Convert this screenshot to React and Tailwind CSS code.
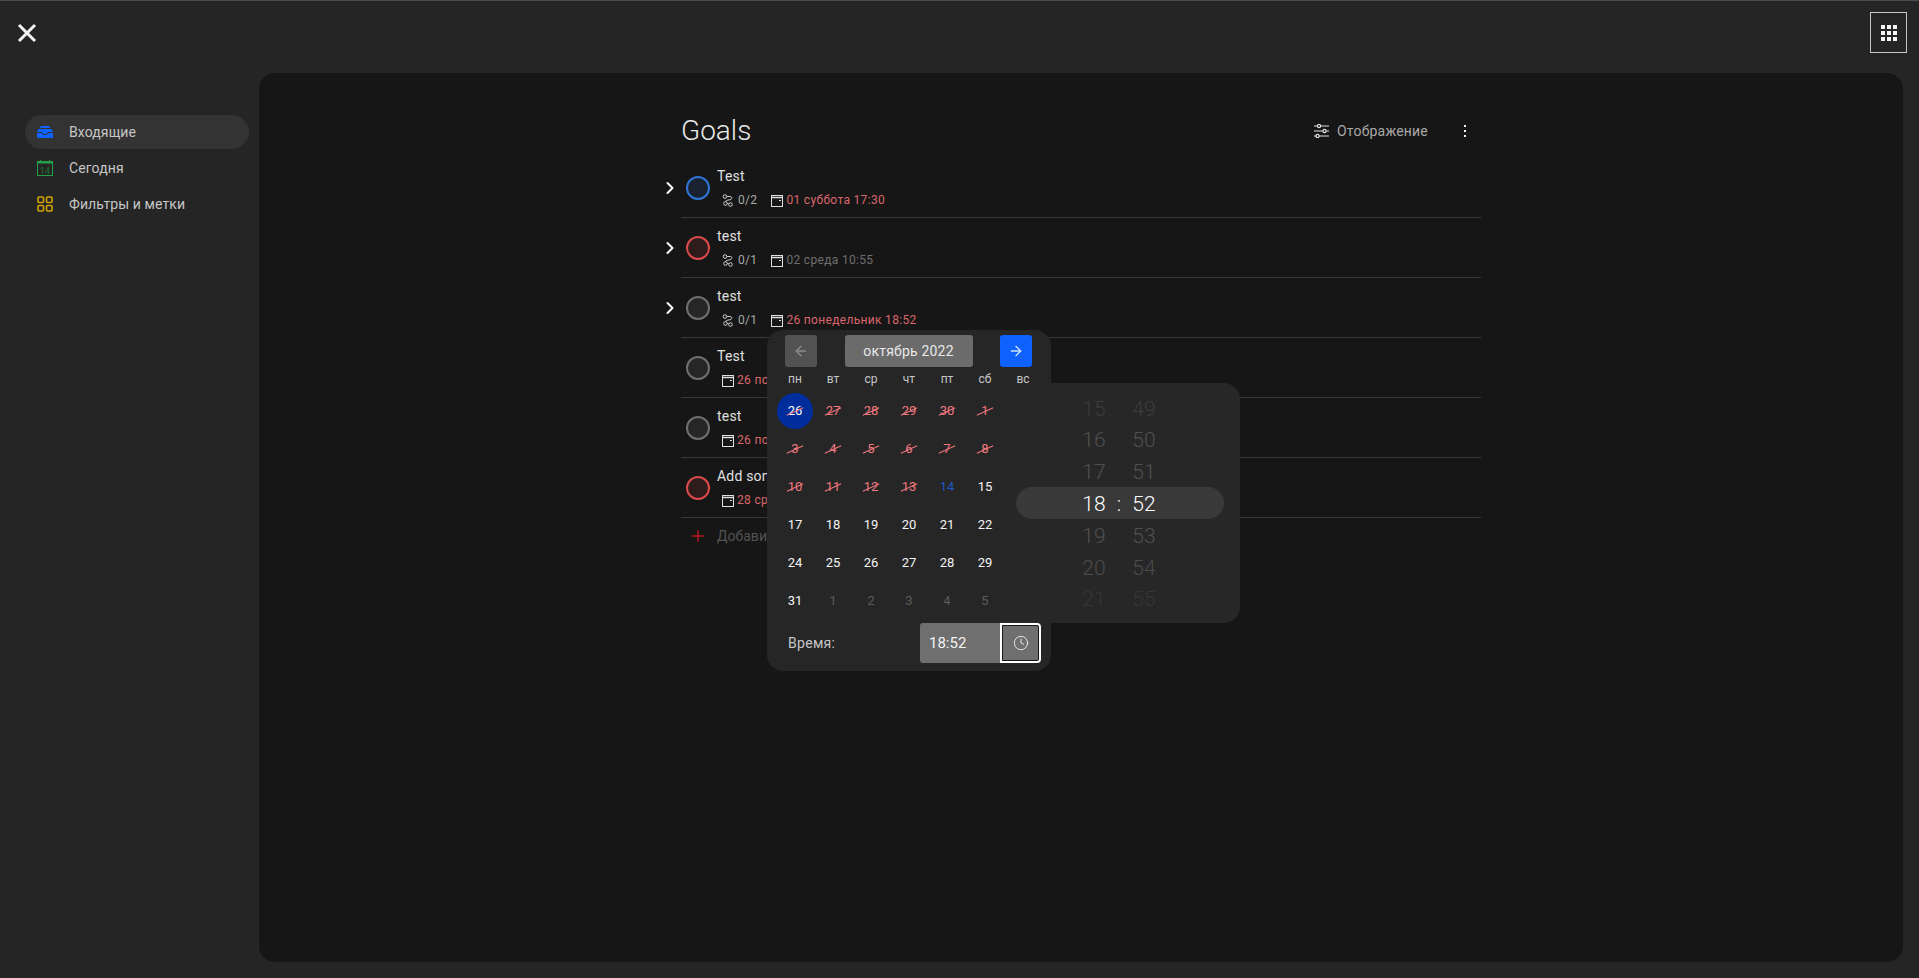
import { ArrowLeft, ArrowRight, ChevronRight, Plus, Clock } from 'lucide-react'

const tasks = [
    { title: 'Test', ring: 'border-[#2f74d6] bg-[#1a2230]', sub: '0/2', date: '01 суббота 17:30', late: true, arrow: true },
    { title: 'test', ring: 'border-[#da4a4a] bg-[#2e1c1c]', sub: '0/1', date: '02 среда 10:55', arrow: true },
    { title: 'test', ring: 'border-[#6f6f6f] bg-[#262626]', sub: '0/1', date: '26 понедельник 18:52', late: true, arrow: true },
    { title: 'Test', ring: 'border-[#6f6f6f] bg-[#262626]', date: '26 понедельник 18:52', late: true },
    { title: 'test', ring: 'border-[#6f6f6f] bg-[#262626]', date: '26 понедельник 18:52', late: true },
    { title: 'Add some tasks', ring: 'border-[#da4a4a] bg-[#2e1c1c]', date: '28 среда 12:00', late: true },
]

const weekDays = ['пн', 'вт', 'ср', 'чт', 'пт', 'сб', 'вс']

const days = [
    [26, 'selected'], [27, 'past'], [28, 'past'], [29, 'past'], [30, 'past'], [1, 'past'], [2, 'past'],
    [3, 'past'], [4, 'past'], [5, 'past'], [6, 'past'], [7, 'past'], [8, 'past'], [9, 'past'],
    [10, 'past'], [11, 'past'], [12, 'past'], [13, 'past'], [14, 'today'], [15], [16],
    [17], [18], [19], [20], [21], [22], [23],
    [24], [25], [26], [27], [28], [29], [30],
    [31], [1, 'next'], [2, 'next'], [3, 'next'], [4, 'next'], [5, 'next'], [6, 'next'],
]

const wheel = [
    { h: 15, m: 49, color: 'text-[#3c3c3c]' },
    { h: 16, m: 50, color: 'text-[#505050]' },
    { h: 17, m: 51, color: 'text-[#505050]' },
    { h: 18, m: 52, active: true },
    { h: 19, m: 53, color: 'text-[#505050]' },
    { h: 20, m: 54, color: 'text-[#4b4b4b]' },
    { h: 21, m: 55, color: 'text-[#363636]' },
]

function CalendarIcon() {
    return (
        <svg width="12" height="13" viewBox="0 0 12 13" fill="none" stroke="#e0e0e0" className="shrink-0">
            <rect x="0.5" y="1.5" width="11" height="11" />
            <path d="M0.5 3.5h11" strokeWidth="1.500" />
            <path d="M8 6.500h2" />
        </svg>
    )
}

function SubtaskIcon() {
    return (
        <svg width="11" height="13" viewBox="0 0 11 13" fill="none" stroke="#d0d0d0" strokeWidth="1" className="shrink-0">
            <circle cx="3" cy="2.500" r="1.800" />
            <circle cx="8.500" cy="10.500" r="1.800" />
            <circle cx="3.500" cy="9.500" r="1.800" />
            <path d="M5 2.500h3.500c1.800 0 1.800 3-.5 3.300-2 .3-4 .4-4.500 1.900M5.300 9.500h1.400" />
        </svg>
    )
}

function InboxIcon() {
    return (
        <svg width="16" height="12" viewBox="0 0 16 12" fill="#0f62fe">
            <path d="M4 0h8l1.500 2h-11z" />
            <path d="M1.500 3h13L16 6H11c-.5 1.500-1.500 2-3 2s-2.500-.5-3-2H0z" />
            <path d="M0 7h4.200c.6 1.300 2 2 3.800 2s3.200-.7 3.800-2H16v5H0z" />
        </svg>
    )
}

function TodayIcon() {
    return (
        <svg width="16" height="16" viewBox="0 0 16 16" fill="none">
            <rect x="0.5" y="1.5" width="15" height="14" stroke="#24a148" />
            <rect x="0" y="1" width="16" height="2.500" fill="#24a148" />
            <path d="M3.500 0v2M12.500 0v2" stroke="#24a148" />
            <text x="8" y="13.500" textAnchor="middle" fontSize="9" fill="#19722f" fontFamily="Roboto, sans-serif">14</text>
        </svg>
    )
}

function FiltersIcon() {
    return (
        <svg width="16" height="16" viewBox="0 0 16 16" fill="none" stroke="#d2a106" strokeWidth="1.600">
            <rect x="1" y="1" width="5.500" height="5.500" rx="1" />
            <rect x="9.500" y="1" width="5.500" height="5.500" rx="1" />
            <rect x="1" y="9.500" width="5.500" height="5.500" rx="1" />
            <rect x="9.500" y="9.500" width="5.500" height="5.500" rx="1" />
        </svg>
    )
}

function SlidersIcon() {
    return (
        <svg width="15" height="14" viewBox="0 0 15 14" fill="none" stroke="#e0e0e0" strokeWidth="1.200">
            <path d="M0 2h15M0 7h15M0 12h15" />
            <circle cx="5" cy="2" r="1.600" fill="#161616" />
            <circle cx="10.500" cy="7" r="1.600" fill="#161616" />
            <circle cx="3.500" cy="12" r="1.600" fill="#161616" />
        </svg>
    )
}

function NavItem({ icon, label, active }) {
    return (
        <div className={`flex items-center h-[34px] rounded-full pl-3 gap-4 text-sm text-[#c6c6c6] tracking-[0.1px] ${active ? 'bg-[#333333]' : ''}`}>
            <span className="w-4 flex justify-center shrink-0">{icon}</span>
            {label}
        </div>
    )
}

function TaskRow({ task }) {
    return (
        <div className="relative flex h-[60px] border-b border-[#393939] pl-[5px]">
            {task.arrow && (
                <ChevronRight size={20} strokeWidth={2.500} className="absolute left-[-21px] top-[20px] text-[#f4f4f4]" />
            )}
            <div className={`w-6 h-6 mt-[18px] rounded-full border-2 shrink-0 ${task.ring}`} />
            <div className="ml-[7px] pt-[8px]">
                <div className="text-sm leading-5 text-[#e0e0e0] tracking-[0.2px]">{task.title}</div>
                <div className="flex items-center h-[14px] mt-[7px] ml-[5px] text-xs tracking-[0.32px]">
                    {task.sub && (
                        <>
                            <SubtaskIcon />
                            <span className="ml-[5px] mr-[14px] text-[#a8a8a8]">{task.sub}</span>
                        </>
                    )}
                    <CalendarIcon />
                    <span className={`ml-[3px] whitespace-nowrap ${task.late ? 'text-[#d9666c]' : 'text-[#6f6f6f]'}`}>{task.date}</span>
                </div>
            </div>
        </div>
    )
}

function DayCell({ day, kind }) {
    const color = {
        selected: 'text-white',
        past: 'text-[#f0767e]',
        today: 'text-[#2059c4]',
        next: 'text-[#5c5c5c]',
    }[kind] || 'text-[#f4f4f4]'

    return (
        <div className={`relative flex items-center justify-center h-[38px] text-[13px] ${color}`}>
            {kind === 'selected' && <span className="absolute inset-[1px] rounded-full bg-[#002d9c]" />}
            <span className="relative">{day}</span>
            {(kind === 'past' || kind === 'selected') && (
                <span className="absolute left-[10px] right-[10px] top-[19px] h-px -rotate-[25deg] bg-[#f0767e]" />
            )}
        </div>
    )
}

function TimeWheel() {
    return (
        <div className="absolute left-[233px] top-[53px] w-[240px] h-[240px] pt-[9px] px-4 bg-[#272727] rounded-r-2xl overflow-hidden text-[21px] font-light">
            {wheel.map(row => (
                <div
                    key={row.h}
                    className={`flex items-center h-[31.8px] pt-[3px] pl-[60px] rounded-full ${row.active ? 'bg-[#393939] text-white' : row.color}`}
                >
                    <span className="w-[36px] text-center">{row.h}</span>
                    <span className="w-[14px] text-center">{row.active ? ':' : ''}</span>
                    <span className="w-[36px] text-center">{row.m}</span>
                </div>
            ))}
        </div>
    )
}

function DatePopover() {
    return (
        <div className="absolute left-[767px] top-[329px] w-[284px] h-[341px] pt-[5px] rounded-2xl bg-[#262626]">
            <div className="flex justify-between pl-[18px] pr-[19px]">
                <button className="flex items-center justify-center w-8 h-8 rounded-[3px] bg-[#525252] text-[#8d8d8d]">
                    <ArrowLeft size={16} />
                </button>
                <button className="w-[128px] h-8 rounded-[3px] bg-[#6b6b6b] text-sm text-[#e8e8e8] tracking-[0.2px]">
                    октябрь 2022
                </button>
                <button className="flex items-center justify-center w-8 h-8 rounded-[3px] bg-[#0f62fe] text-[#d0e2ff]">
                    <ArrowRight size={16} />
                </button>
            </div>

            <div className="grid grid-cols-7 px-[9px] mt-[2px] h-5 items-center text-xs text-center text-[#c6c6c6]">
                {weekDays.map(d => <span key={d}>{d}</span>)}
            </div>

            <div className="grid grid-cols-7 px-[9px] mt-[3px]">
                {days.map(([day, kind], i) => <DayCell key={i} day={day} kind={kind} />)}
            </div>

            <div className="flex items-center mt-[3px] pl-[21px] pr-[10px]">
                <span className="text-sm text-[#c6c6c6] tracking-[0.3px]">Время:</span>
                <div className="ml-auto flex h-10">
                    <div className="flex items-center w-[80px] pl-[9px] bg-[#6f6f6f] rounded-l-[3px] text-[15px] text-[#f4f4f4]">18:52</div>
                    <div className="flex items-center justify-center w-[41px] bg-[#6f6f6f] border-2 border-white outline outline-1 -outline-offset-3 outline-[#161616] rounded-tr-[4px] rounded-br-[4px] text-[#f4f4f4]">
                        <Clock size={16} strokeWidth={1.300} />
                    </div>
                </div>
            </div>

            <TimeWheel />
        </div>
    )
}

export default function App() {
    return (
        <div className="relative flex flex-col h-screen bg-[#252525] border-t border-[#4a4a52] font-[Roboto,sans-serif] overflow-hidden">
            {/* Шапка */}
            <header className="flex justify-between h-[72px] shrink-0 pl-[15px] pr-3">
                <svg width="24" height="24" viewBox="0 0 24 24" className="mt-[20px]" stroke="#f4f4f4" strokeWidth="3">
                    <path d="M4 4l16 16M20 4L4 20" />
                </svg>
                <button className="grid grid-cols-[4px_4px_4px] content-center justify-center gap-[2px] w-[37px] h-[41px] mt-[11px] border-[1.500px] border-[#c6c6c6]">
                    {Array.from({ length: 9 }).map((_, i) => (
                        <span key={i} className="w-1 h-1 bg-[#f4f4f4]" />
                    ))}
                </button>
            </header>

            <div className="flex flex-1 min-h-0 pr-4 pb-4">
                {/* Боковое меню */}
                <aside className="w-[259px] shrink-0 pt-[42px] pl-[25px] pr-[10px]">
                    <nav className="flex flex-col gap-[2px]">
                        <NavItem active icon={<InboxIcon />} label="Входящие" />
                        <NavItem icon={<TodayIcon />} label="Сегодня" />
                        <NavItem icon={<FiltersIcon />} label="Фильтры и метки" />
                    </nav>
                </aside>

                {/* Список задач */}
                <main className="flex-1 rounded-2xl bg-[#161616]">
                    <div className="w-[800px] mx-auto pt-[42px]">
                        <div className="flex items-center justify-between h-[43px] pb-[11px] pr-[15px]">
                            <h1 className="text-[28px] font-light text-[#e8e8e8]">Goals</h1>
                            <div className="flex items-center text-sm text-[#a8a8a8] tracking-[0.2px]">
                                <SlidersIcon />
                                <span className="ml-[8px]">Отображение</span>
                                <span className="ml-[36px] flex flex-col gap-[3px]">
                                    <i className="w-[2px] h-[2px] bg-[#f4f4f4]" />
                                    <i className="w-[2px] h-[2px] bg-[#f4f4f4]" />
                                    <i className="w-[2px] h-[2px] bg-[#f4f4f4]" />
                                </span>
                            </div>
                        </div>

                        {tasks.map((task, i) => <TaskRow key={i} task={task} />)}

                        <div className="flex items-center h-[36px] pl-[8px] text-sm text-[#525252]">
                            <Plus size={18} className="text-[#b81922]" />
                            <span className="ml-[10px]">Добавить задачу</span>
                        </div>
                    </div>
                </main>
            </div>

            <DatePopover />
        </div>
    )
}
